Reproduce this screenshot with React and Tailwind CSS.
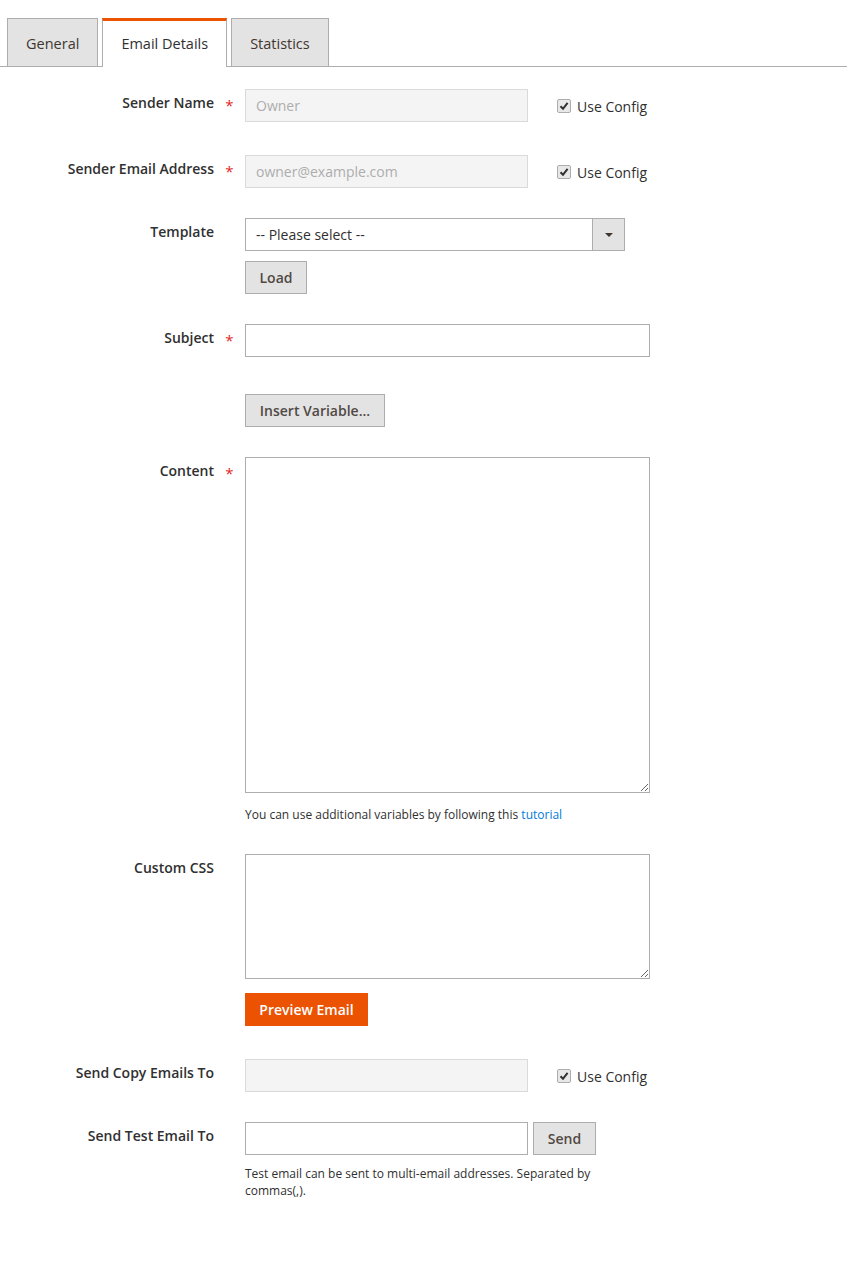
import { useState } from 'react';

const FONT = { fontFamily: '"Open Sans", "Noto Sans", sans-serif' };

const TABS = ['General', 'Email Details', 'Statistics'];

function Tabs({ active, onChange }) {
  return (
    <div className="flex items-end gap-[4px] pl-[7px] border-b border-[#adadad]">
      {TABS.map((tab) => {
        const isActive = tab === active;
        return (
          <button
            key={tab}
            onClick={() => onChange(tab)}
            className={
              isActive
                ? 'h-[49px] -mb-px px-[18px] bg-white border-x border-[#adadad] border-t-[3px] border-t-[#eb5202] text-[14.5px] text-[#303030]'
                : 'h-[48px] px-[18px] pt-[2px] bg-[#e3e3e3] border-x border-t border-[#adadad] text-[14.5px] text-[#41362f]'
            }
          >
            {tab}
          </button>
        );
      })}
    </div>
  );
}

function Row({ label, required, className = '', children }) {
  return (
    <div className={'flex ' + className}>
      <label className="w-[214px] shrink-0 text-right text-[14px] font-semibold text-[#303030] pt-[4px] leading-[20px]">
        {label}
      </label>
      <div className="w-[31px] shrink-0 text-center text-[#e22626] text-[15px] pt-[6px] leading-[20px]">
        {required ? '*' : ''}
      </div>
      <div className="flex-1">{children}</div>
    </div>
  );
}

function UseConfig() {
  return (
    <label className="flex items-center ml-[29px] mt-[1px] text-[14px] text-[#303030] gap-[6px]">
      <span className="w-[14px] h-[14px] rounded-[2px] border border-[#adadad] bg-[#e8e8e8] flex items-center justify-center">
        <svg width="10" height="10" viewBox="0 0 10 10">
          <path d="M1.5 5.2 L4 7.8 L8.6 1.8" fill="none" stroke="#303030" strokeWidth="2" />
        </svg>
      </span>
      Use Config
    </label>
  );
}

const inputBase = 'h-[33px] border px-[10px] text-[14px] outline-none';
const btn = 'block h-[33px] bg-[#e3e3e3] border border-[#adadad] text-[14px] font-semibold text-[#514943] whitespace-nowrap';

export default function App() {
  const [tab, setTab] = useState('Email Details');
  const [subject, setSubject] = useState('');
  const [testEmail, setTestEmail] = useState('');

  return (
    <div className="bg-white min-h-[1265px] w-[847px]" style={FONT}>
      <div className="pt-[18px]">
        <Tabs active={tab} onChange={setTab} />
      </div>

      <div className="pt-[22px]">
        {/* Sender Name */}
        <Row label="Sender Name" required>
          <div className="flex items-center">
            <input
              disabled
              value="Owner"
              className={inputBase + ' w-[283px] bg-[#f4f4f4] border-[#dadada] text-[#adadad]'}
              readOnly
            />
            <UseConfig />
          </div>
        </Row>

        {/* Sender Email */}
        <Row label="Sender Email Address" required className="mt-[33px]">
          <div className="flex items-center">
            <input
              disabled
              value="owner@example.com"
              className={inputBase + ' w-[283px] bg-[#f4f4f4] border-[#dadada] text-[#adadad]'}
              readOnly
            />
            <UseConfig />
          </div>
        </Row>

        {/* Template */}
        <Row label="Template" className="mt-[30px]">
          <div className="w-[380px] h-[33px] border border-[#adadad] flex items-center">
            <span className="flex-1 px-[10px] text-[14px] text-[#303030]">-- Please select --</span>
            <span className="w-[32px] h-full bg-[#e3e3e3] border-l border-[#adadad] flex items-center justify-center">
              <svg width="8" height="4" viewBox="0 0 8 4">
                <path d="M0 0 L8 0 L4 4 Z" fill="#41362f" />
              </svg>
            </span>
          </div>
          <button className={btn + ' mt-[10px] w-[62px]'}>Load</button>
        </Row>

        {/* Subject */}
        <Row label="Subject" required className="mt-[30px]">
          <input
            value={subject}
            onChange={(e) => setSubject(e.target.value)}
            className={inputBase + ' block w-[405px] border-[#adadad] text-[#303030]'}
          />
          <button className={btn + ' mt-[37px] w-[140px]'}>Insert Variable...</button>
        </Row>

        {/* Content */}
        <Row label="Content" required className="mt-[30px]">
          <textarea className="block w-[405px] h-[336px] border border-[#adadad] outline-none p-[10px] text-[14px]" />
          <p className="mt-[14px] text-[12px] text-[#303030] leading-[16px]">
            You can use additional variables by following this{' '}
            <a href="#" className="text-[#007bdb]">tutorial</a>
          </p>
        </Row>

        {/* Custom CSS */}
        <Row label="Custom CSS" className="mt-[31px]">
          <textarea className="block w-[405px] h-[125px] border border-[#adadad] outline-none p-[10px] text-[14px]" />
          <button className="block mt-[14px] h-[33px] w-[123px] bg-[#eb5202] text-white text-[14px] font-semibold">
            Preview Email
          </button>
        </Row>

        {/* Send Copy */}
        <Row label="Send Copy Emails To" className="mt-[33px]">
          <div className="flex items-center">
            <input
              disabled
              className={inputBase + ' w-[283px] bg-[#f4f4f4] border-[#dadada]'}
            />
            <UseConfig />
          </div>
        </Row>

        {/* Send Test */}
        <Row label="Send Test Email To" className="mt-[30px]">
          <div className="flex items-center gap-[5px]">
            <input
              value={testEmail}
              onChange={(e) => setTestEmail(e.target.value)}
              className={inputBase + ' w-[283px] border-[#adadad] text-[#303030]'}
            />
            <button className={btn + ' w-[63px] font-normal'}>Send</button>
          </div>
          <p className="mt-[10px] w-[380px] text-[12px] text-[#303030] leading-[17px]">
            Test email can be sent to multi-email addresses. Separated by commas(,).
          </p>
        </Row>
      </div>
    </div>
  );
}
